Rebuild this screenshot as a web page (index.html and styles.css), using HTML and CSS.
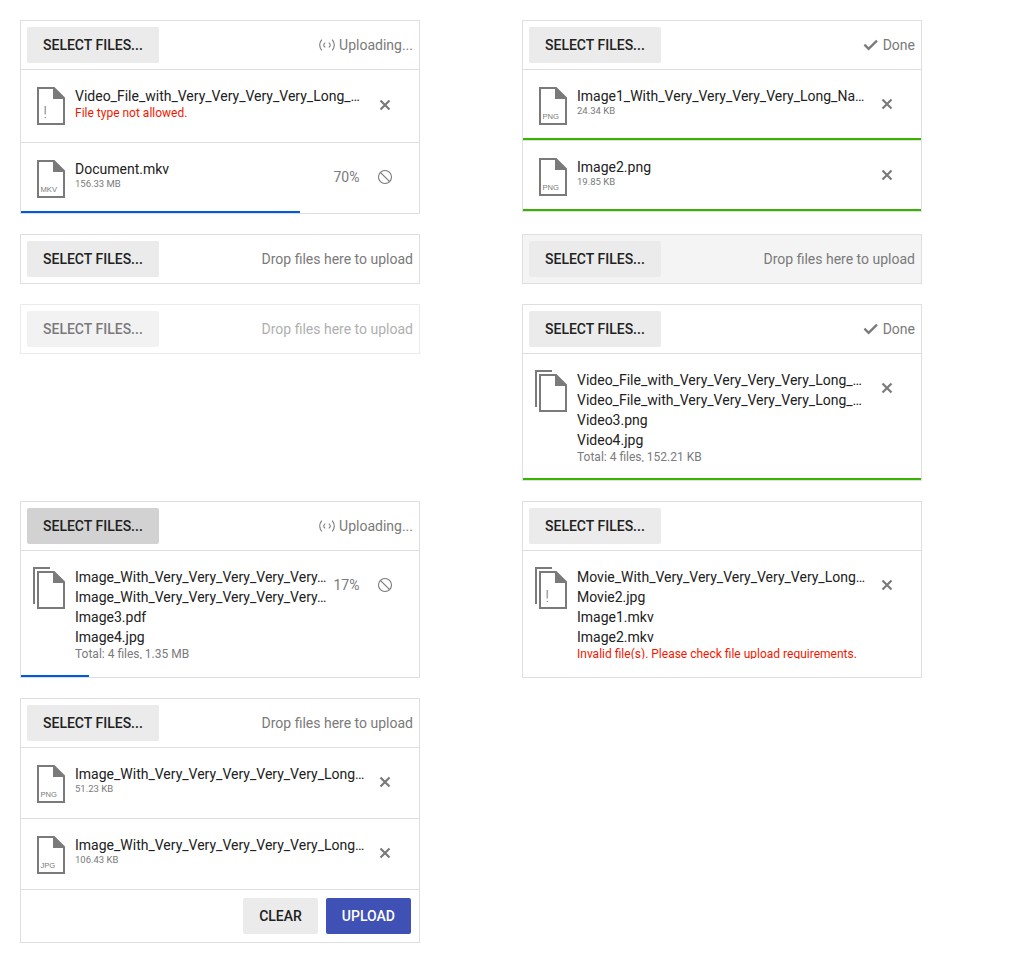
FILE: index.html
```
<!DOCTYPE html>
<html lang="en">
<head>
<meta charset="utf-8">
<title>Upload</title>
<link rel="stylesheet" href="styles.css">
</head>
<body>
<svg class="defs" aria-hidden="true">
  <symbol id="file" viewBox="0 0 28 38"><path d="M1 1H17L27 11V37H1Z" fill="none" stroke="currentColor" stroke-width="2"/><path d="M16 0L28 12H16Z" fill="currentColor"/></symbol>
  <symbol id="files" viewBox="0 0 32 42"><path d="M17 1H1V37" fill="none" stroke="currentColor" stroke-width="2"/><path d="M5 5H21L31 15V41H5Z" fill="none" stroke="currentColor" stroke-width="2"/><path d="M20 4L32 16H20Z" fill="currentColor"/></symbol>
  <symbol id="close" viewBox="0 0 16 16"><path d="M3.5 3.5L12.5 12.5M12.5 3.5L3.5 12.5" fill="none" stroke="currentColor" stroke-width="2.2"/></symbol>
  <symbol id="cancel" viewBox="0 0 16 16"><path d="M3.3 3.3L12.7 12.7" stroke="currentColor" stroke-width="1.2"/><circle cx="8" cy="8" r="6.5" fill="none" stroke="currentColor" stroke-width="1.1"/></symbol>
  <symbol id="busy" viewBox="0 0 16 16"><path d="M2.8 2.6Q-1.4 8 2.8 13.4M13.2 2.6Q17.4 8 13.2 13.4M6.2 5.6Q3.2 8 6.2 10.4M9.8 5.6Q12.8 8 9.8 10.4" fill="none" stroke="currentColor" stroke-width="1.1"/></symbol>
  <symbol id="check" viewBox="0 0 16 16"><path d="M1.4 7.6L5.6 11.8L14 3.6" fill="none" stroke="currentColor" stroke-width="2.3"/></symbol>
</svg>
<main class="demo">
  <section class="upload">
    <header class="head"><button class="btn">SELECT FILES...</button><span class="status"><svg class="icon"><use href="#busy"/></svg><span>Uploading...</span></span></header>
    <div class="item invalid"><span class="file"><svg><use href="#file"/></svg><b class="mark">!</b></span><div class="info"><span class="name">Video_File_with_Very_Very_Very_Very_Long_…</span><span class="error">File type not allowed.</span></div><svg class="icon action"><use href="#close"/></svg></div>
    <div class="item"><span class="file"><svg><use href="#file"/></svg><b class="ext">MKV</b></span><div class="info"><span class="name">Document.mkv</span><span class="size">156.33 MB</span></div><span class="pct">70%</span><svg class="icon action"><use href="#cancel"/></svg><i class="progress" style="width:70%"></i></div>
  </section>

  <section class="upload">
    <header class="head"><button class="btn">SELECT FILES...</button><span class="status"><svg class="icon"><use href="#check"/></svg><span>Done</span></span></header>
    <div class="item"><span class="file"><svg><use href="#file"/></svg><b class="ext">PNG</b></span><div class="info"><span class="name">Image1_With_Very_Very_Very_Very_Long_Na…</span><span class="size">24.34 KB</span></div><svg class="icon action"><use href="#close"/></svg><i class="progress done"></i></div>
    <div class="item"><span class="file"><svg><use href="#file"/></svg><b class="ext">PNG</b></span><div class="info"><span class="name">Image2.png</span><span class="size">19.85 KB</span></div><svg class="icon action"><use href="#close"/></svg><i class="progress done"></i></div>
  </section>

  <section class="upload">
    <header class="head"><button class="btn">SELECT FILES...</button><span class="status">Drop files here to upload</span></header>
  </section>

  <section class="upload">
    <header class="head hovered"><button class="btn">SELECT FILES...</button><span class="status">Drop files here to upload</span></header>
  </section>

  <section class="upload disabled">
    <header class="head"><button class="btn">SELECT FILES...</button><span class="status">Drop files here to upload</span></header>
  </section>

  <section class="upload">
    <header class="head"><button class="btn">SELECT FILES...</button><span class="status"><svg class="icon"><use href="#check"/></svg><span>Done</span></span></header>
    <div class="item multi"><span class="file"><svg><use href="#files"/></svg></span><div class="info"><span class="name">Video_File_with_Very_Very_Very_Very_Long_…</span><span class="name">Video_File_with_Very_Very_Very_Very_Long_…</span><span class="name">Video3.png</span><span class="name">Video4.jpg</span><span class="total">Total: 4 files, 152.21 KB</span></div><svg class="icon action"><use href="#close"/></svg><i class="progress done"></i></div>
  </section>

  <section class="upload">
    <header class="head"><button class="btn pressed">SELECT FILES...</button><span class="status"><svg class="icon"><use href="#busy"/></svg><span>Uploading...</span></span></header>
    <div class="item multi"><span class="file"><svg><use href="#files"/></svg></span><div class="info"><span class="name">Image_With_Very_Very_Very_Very_Very…</span><span class="name">Image_With_Very_Very_Very_Very_Very…</span><span class="name">Image3.pdf</span><span class="name">Image4.jpg</span><span class="total">Total: 4 files, 1.35 MB</span></div><span class="pct">17%</span><svg class="icon action"><use href="#cancel"/></svg><i class="progress" style="width:17%"></i></div>
  </section>

  <section class="upload">
    <header class="head"><button class="btn">SELECT FILES...</button></header>
    <div class="item multi"><span class="file"><svg><use href="#files"/></svg><b class="mark">!</b></span><div class="info"><span class="name">Movie_With_Very_Very_Very_Very_Very_Long…</span><span class="name">Movie2.jpg</span><span class="name">Image1.mkv</span><span class="name">Image2.mkv</span><span class="total failed">Invalid file(s). Please check file upload requirements.</span></div><svg class="icon action"><use href="#close"/></svg></div>
  </section>

  <section class="upload">
    <header class="head"><button class="btn">SELECT FILES...</button><span class="status">Drop files here to upload</span></header>
    <div class="item"><span class="file"><svg><use href="#file"/></svg><b class="ext">PNG</b></span><div class="info"><span class="name">Image_With_Very_Very_Very_Very_Very_Long…</span><span class="size">51.23 KB</span></div><svg class="icon action"><use href="#close"/></svg></div>
    <div class="item"><span class="file"><svg><use href="#file"/></svg><b class="ext">JPG</b></span><div class="info"><span class="name">Image_With_Very_Very_Very_Very_Very_Long…</span><span class="size">106.43 KB</span></div><svg class="icon action"><use href="#close"/></svg></div>
    <footer class="foot"><button class="btn">CLEAR</button><button class="btn primary">UPLOAD</button></footer>
  </section>
</main>
</body>
</html>
```

FILE: styles.css
```
* { box-sizing: border-box; }
body { margin: 0; background: #fff; color: #212121; font: 14px/20px Roboto, sans-serif; }
.defs { position: absolute; width: 0; height: 0; }
.demo { display: grid; grid-template-columns: 400px 400px; gap: 20px 102px; align-items: start; padding: 20px; }
.upload { border: 1px solid #dfdfdf; }
.disabled { opacity: .6; }
.head { display: flex; align-items: center; justify-content: space-between; height: 48px; padding: 6px; }
.hovered { background: #f4f4f4; }
.status { display: flex; align-items: center; gap: 4px; color: #7a7a7a; }
.icon { flex: none; width: 16px; height: 16px; color: #7a7a7a; }
.btn { height: 36px; padding: 0 16px; border: 0; border-radius: 2px; background: #ebebeb; color: #212121; font: 500 14px/20px Roboto, sans-serif; white-space: nowrap; }
.pressed { background: #d2d2d2; }
.primary { background: #3f51b5; color: #fff; }

.item { position: relative; display: flex; align-items: flex-start; height: 71px; padding: 16px 26px 0 16px; border-top: 1px solid #dfdfdf; }
.invalid { height: 73px; }
.multi { height: 127px; padding-left: 12px; }
.file { position: relative; flex: none; width: 28px; height: 38px; margin: 1px 10px 0 0; color: #7a7a7a; }
.file svg { display: block; width: 100%; height: 100%; }
.multi .file { width: 32px; height: 42px; margin-top: 0; }
.ext { position: absolute; left: 3.5px; bottom: 4px; font: 400 7.6px/9px "Liberation Sans", Arial, sans-serif; }
.mark { position: absolute; right: 18px; bottom: 3px; font: 300 17px/20px Roboto, sans-serif; }
.info { display: flex; flex: 1; flex-direction: column; min-width: 0; white-space: nowrap; }
.size { color: #7a7a7a; font-size: 9.5px; line-height: 10px; }
.error { color: #f31700; font-size: 12px; line-height: 14px; }
.total { overflow: hidden; height: 12px; color: #7a7a7a; font-size: 12px; line-height: 14px; }
.failed { color: #f31700; }
.pct { margin: 8px 17.5px 0 0; line-height: 20px; color: #7a7a7a; }
.action { margin-top: 10px; }
.invalid .action { margin-top: 11px; }
.progress { position: absolute; left: 0; bottom: 0; height: 2px; background: #0058e9; }
.done { width: 100%; background: #37b400; }
.foot { display: flex; justify-content: flex-end; gap: 8px; padding: 8px; border-top: 1px solid #dfdfdf; }
```
